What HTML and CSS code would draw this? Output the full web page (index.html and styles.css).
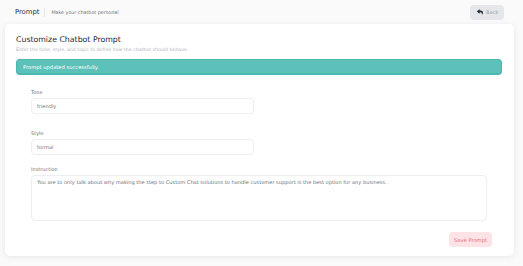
FILE: index.html
```html
<!DOCTYPE html>
<html>
<head>
<meta charset="utf-8">
<link rel="stylesheet" href="styles.css">
</head>
<body>
<header class="topbar">
  <div class="crumbs">
    <span class="page-title">Prompt</span>
    <span class="divider"></span>
    <span class="page-sub">Make your chatbot personal</span>
  </div>
  <button class="back-btn">
    <svg class="back-icon" viewBox="0 0 512 512" width="6" height="6"><path fill="#1f2937" d="M8.3 189.8L184.3 37.8c15.4-13.3 39.7-2.5 39.7 18.2v80.1C384.6 137.9 512 170.1 512 322.3c0 61.4-39.6 122.3-83.3 154.1-13.7 9.9-33.1-2.5-28.1-18.6 45.3-144.7-21.5-183.1-176.6-185.4V360c0 20.7-24.3 31.5-39.7 18.2l-176-152c-11.1-9.6-11.1-26.8 0-36.4z"/></svg>
    <span>Back</span>
  </button>
</header>
<main class="card">
  <h1 class="card-title">Customize Chatbot Prompt</h1>
  <p class="card-sub">Enter the tone, style, and topic to define how the chatbot should behave.</p>
  <div class="alert">Prompt updated successfully.</div>
  <form class="form">
    <div class="field">
      <label class="label">Tone</label>
      <input class="input" type="text" value="friendly">
    </div>
    <div class="field">
      <label class="label">Style</label>
      <input class="input" type="text" value="formal">
    </div>
    <div class="field field-wide">
      <label class="label">Instruction</label>
      <textarea class="textarea">You are to only talk about why making the step to Custom Chat solutions to handle customer support is the best option for any business.</textarea>
    </div>
    <div class="actions">
      <button class="save-btn" type="button">Save Prompt</button>
    </div>
  </form>
</main>
</body>
</html>
```

FILE: styles.css
```css
* { box-sizing: border-box; }
html, body { margin: 0; padding: 0; }
body {
  background: #fafafa;
  font-family: "DejaVu Sans", "Noto Sans", sans-serif;
  color: #374151;
  width: 523px;
  height: 266px;
  overflow: hidden;
}
.topbar {
  display: flex;
  justify-content: space-between;
  align-items: center;
  padding: 4px 19px 0 15px;
  height: 24px;
}
.crumbs { display: flex; align-items: center; margin-top: -4px; }
.page-title { font-size: 6.8px; color: #1f2937; }
.divider { width: 1px; height: 9px; background: #e5e7eb; margin: 0 6px 0 5px; }
.page-sub { font-size: 4.8px; color: #6b7280; }
.back-btn {
  display: flex; align-items: center; gap: 3px;
  background: #e5e7eb; border: none; border-radius: 4px;
  height: 15px; width: 34px; padding: 0 0 0 7px;
  font-family: inherit; font-size: 5.2px; color: #9ca3af;
  margin-top: -4px;
}
.card {
  margin: 0 9px 0 5px;
  background: #fff;
  border-radius: 5px;
  box-shadow: 0 1px 6px rgba(0,0,0,0.08);
  height: 232px;
  padding: 11px 12px 0 11px;
}
.card-title { margin: 0; font-weight: normal; font-size: 7.8px; color: #1f2937; }
.card-sub { margin: 3px 0 0; font-size: 4.7px; color: #b0b5bd; }
.alert {
  margin-top: 7px;
  background: #5cc2b9;
  border: 1px solid #49b8ae;
  border-bottom-width: 2px;
  border-radius: 4px;
  height: 16px;
  display: flex; align-items: center;
  padding-left: 6px;
  color: #fff;
  font-size: 5.2px;
}
.form { padding: 14px 0 0 15px; display: flex; flex-direction: column; }
.field { display: flex; flex-direction: column; margin-bottom: 16px; }
.label { font-size: 5px; color: #6b7280; margin-bottom: 3px; }
.input {
  width: 223px; height: 16px;
  border: 1px solid #eceef1; border-radius: 4px;
  font-family: inherit; font-size: 5.1px; color: #6b7280;
  padding: 0 5px; outline: none;
}
.field-wide { margin-bottom: 0; margin-top: -5px; }
.textarea {
  width: 456px; height: 46px;
  border: 1px solid #eceef1; border-radius: 4px;
  font-family: inherit; font-size: 5.1px; color: #6b7280;
  padding: 3px 5px; resize: vertical;
}
.textarea::-webkit-resizer { background: transparent; }
.actions { display: flex; justify-content: flex-end; margin-top: 11px; padding-right: 10px; }
.save-btn {
  background: #fde3e5; border: none; border-radius: 4px;
  width: 43px; height: 15px; padding: 0; white-space: nowrap;
  font-family: inherit; font-size: 5.2px; color: #e8707c;
}
```
